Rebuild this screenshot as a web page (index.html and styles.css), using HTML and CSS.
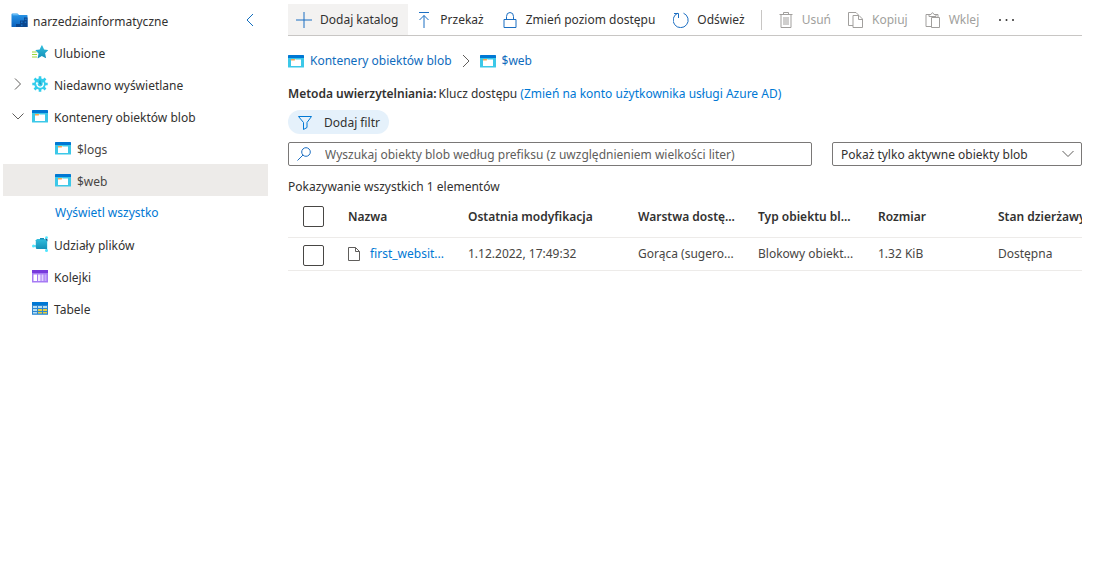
FILE: index.html
```html
<!DOCTYPE html>
<html lang="pl">
<head>
<meta charset="utf-8">
<title>narzedziainformatyczne</title>
<link rel="stylesheet" href="styles.css">
</head>
<body>
<svg class="sprite" aria-hidden="true">
  <defs>
    <linearGradient id="sky" x1="0" y1="0" x2="0" y2="1"><stop offset="0" stop-color="#32bedd"/><stop offset="1" stop-color="#1490b8"/></linearGradient>
    <linearGradient id="folder" x1="0" y1="0" x2="0" y2="1"><stop offset="0" stop-color="#2a98ea"/><stop offset="1" stop-color="#0a60bc"/></linearGradient>
  </defs>
  <symbol id="container" viewBox="0 0 16 13">
    <path d="M0 3h16v9q0 .5-.5.5H.5q-.5 0-.5-.5z" fill="#3cc8e8"/>
    <path d="M.5 0h15q.5 0 .5.5V3H0V.500Q0 0 .5 0z" fill="#0078d4"/>
    <path d="M3 4h4l1 .5h5V11H3z" fill="#fff"/>
    <path d="M3 4h3.600l.8.700-.8.800H3z" fill="#f7a650"/>
  </symbol>
</svg>
<div class="app">
  <nav class="tree">
    <div class="row account">
      <svg class="icon big" viewBox="0 0 17 17"><path d="M.5 2.500q0-1 1-1h5l1.500 1.500h8q.5 0 .5.500v11q0 .5-.5.5h-15q-.5 0-.5-.5z" fill="url(#folder)"/><path d="M1.500 2.200h5l1 1h-6z" fill="#7cc8f8"/><path d="M13 5.500h3.500V15H13zM9 8.500h4V15H9zM5 12h4v3H5z" fill="#0b478f"/><path d="M13.700 6.500h2V8h-2zM10 9.500h1.500V11H10zM13.700 9.500h1.500V11h-1.500zM10 12.500h1.500V14H10z" fill="#1c70c4"/></svg>
      <span>narzedziainformatyczne</span>
      <button class="collapse" type="button" aria-label="Zwiń"><svg viewBox="0 0 8 14"><path d="M7 1 1 7l6 6"/></svg></button>
    </div>
    <a class="row" href="#"><span class="caret"></span>
      <svg class="icon" viewBox="0 0 16 16"><path d="M9.500 1.500q.4-.6.8 0l1.800 4 3.700.4q.5.200.1.600l-2.800 2.800.9 4.400q0 .5-.5.300L9.800 12l-3.700 2.200q-.5.100-.4-.4l.8-4.400-2.900-2.800q-.3-.5.200-.6l3.900-.5z" fill="url(#sky)"/><path d="M0 8h4.500M0 10.500h5M0 13h5" stroke="#9bd83c" stroke-width="1.200" fill="none"/></svg>
      <span>Ulubione</span></a>
    <a class="row" href="#"><span class="caret"><svg viewBox="0 0 14 14"><path d="M4 1.500 9.500 7 4 12.500"/></svg></span>
      <svg class="icon" viewBox="0 0 16 16"><g stroke="#32cdec" stroke-width="2.600"><path d="M8 .3v15.400M.3 8h15.400M2.500 2.500l11 11M13.500 2.500l-11 11"/></g><circle cx="8" cy="8" r="5.800" fill="#32cdec"/><path d="M5 7.500a3.200 3.200 0 1 0 6-1" fill="none" stroke="#fff" stroke-width="1.300"/><path d="m3.700 8.200 1-2.400 1.900 1.700z" fill="#fff"/><path d="M8 4.500v3.500h1.500" stroke="#1c8fb5"/></svg>
      <span>Niedawno wyświetlane</span></a>
    <a class="row" href="#"><span class="caret"><svg viewBox="0 0 14 14"><path d="M1.500 4.500 7 10l5.500-5.500"/></svg></span>
      <svg class="tile"><use href="#container"/></svg>
      <span>Kontenery obiektów blob</span></a>
    <a class="row child" href="#"><svg class="tile"><use href="#container"/></svg><span>$logs</span></a>
    <a class="row child selected" href="#" aria-current="page"><svg class="tile"><use href="#container"/></svg><span>$web</span></a>
    <a class="row child all" href="#"><span>Wyświetl wszystko</span></a>
    <a class="row" href="#"><span class="caret"></span>
      <svg class="icon" viewBox="0 0 16 16"><path d="M1.500 10H5M14.500 1v14" stroke="#50d2ee" stroke-width="1.500"/><path d="M5 3h10v10H5q-1.200 0-1.200-1.200V4.200z" fill="url(#sky)"/><path d="M8 2h4v1.500H8z" fill="#1490b8"/><path d="m13 2 2.500 1.500-.2 2z" fill="#173f75"/><circle cx="1.500" cy="10" r="1.500" fill="#50e6ff"/><circle cx="14.500" cy="1.500" r="1.300" fill="#50e6ff"/><circle cx="14.500" cy="14.500" r="1.500" fill="#50e6ff"/></svg>
      <span>Udziały plików</span></a>
    <a class="row" href="#"><span class="caret"></span>
      <svg class="tile" viewBox="0 0 16 13"><path d="M0 3h16v9.500H0z" fill="#a67af4"/><path d="M0 0h16v3H0z" fill="#773adc"/><path d="M1.500 4.500H5v6.500H1.500z" fill="#fff"/><path d="M6 4.500h2.500v6.500H6z" fill="#f1e9ff"/><path d="M9.500 4.500h2v6.500h-2z" fill="#e2d1ff"/><path d="M12.500 4.500h2v6.500h-2z" fill="#c9acfa"/></svg>
      <span>Kolejki</span></a>
    <a class="row" href="#"><span class="caret"></span>
      <svg class="tile" viewBox="0 0 16 13"><path d="M0 0h16v12.500H0z" fill="#0078d4"/><path d="M0 3h16v9.500H0z" fill="#2c86d0"/><path d="M1 4h4v2H1zM6 4h4v2H6zM11 4h4v2h-4zM1 7h4v2H1zM1 10h4v1.500H1z" fill="#b5def5"/><path d="M6 7h4v2H6zM11 7h4v2h-4zM6 10h4v1.500H6zM11 10h4v1.500h-4z" fill="#e6cf3e"/></svg>
      <span>Tabele</span></a>
  </nav>

  <main class="content">
    <div class="toolbar" role="toolbar">
      <button class="hover" type="button"><svg viewBox="0 0 16 16"><path d="M8 0v16M0 8h16"/></svg>Dodaj katalog</button>
      <button type="button"><svg viewBox="0 0 16 16"><path d="M3 .5h10M8 16V3.500M3.500 8 8 3.500 12.500 8"/></svg>Przekaż</button>
      <button type="button"><svg viewBox="0 0 16 16"><path d="M2 7.500h12v8H2zM4.500 7.500v-3a3.500 4 0 0 1 7 0v3"/></svg>Zmień poziom dostępu</button>
      <button type="button"><svg viewBox="0 0 16 16"><path d="M10.500 1.200A7.500 7.500 0 1 1 4.800 1.200M1 1.500h4.500V6"/></svg>Odśwież</button>
      <span class="divider"></span>
      <button type="button" disabled><svg viewBox="0 0 16 16"><path d="M1.500 2.500h13M5.500 2.500v-2h5v2M3 2.500v13h10v-13M6 5v8M8 5v8M10 5v8"/></svg>Usuń</button>
      <button type="button" disabled><svg viewBox="0 0 16 16"><path d="M5 13.500H.5V.500H8l2.500 2.500M5 3.500h6l3.500 3.500v8.500H5zM10.500 3.500v4h4"/></svg>Kopiuj</button>
      <button type="button" disabled><svg viewBox="0 0 16 16"><path d="M6.500 14.500H1V2.500h3.500M10.500 2.500H13V5.500M4 4.500v-2h2q1.500-3.500 3 0h2v2zM6.500 5.500h8v10h-8z"/></svg>Wklej</button>
      <button class="more" type="button" aria-label="Więcej"><svg viewBox="0 0 16 16"><circle cx="1" cy="8" r="1"/><circle cx="7.500" cy="8" r="1"/><circle cx="14" cy="8" r="1"/></svg></button>
    </div>

    <nav class="crumbs" aria-label="Ścieżka">
      <a href="#"><svg class="tile"><use href="#container"/></svg>Kontenery obiektów blob</a>
      <svg class="sep" viewBox="0 0 8 14"><path d="m1 1 6 6-6 6"/></svg>
      <a href="#"><svg class="tile"><use href="#container"/></svg>$web</a>
    </nav>

    <p class="auth"><b>Metoda uwierzytelniania:</b><span>Klucz dostępu <a href="#">(Zmień na konto użytkownika usługi Azure AD)</a></span></p>

    <button class="pill" type="button"><svg viewBox="0 0 16 16"><path d="M1.500 1.500h13L10 7.500v5l-3.500 2v-7z"/></svg>Dodaj filtr</button>

    <div class="filters">
      <label class="search"><svg viewBox="0 0 14 14"><circle cx="9" cy="5" r="4.300"/><path d="M6 8 .5 13.500"/></svg>
        <input type="text" aria-label="Wyszukaj" placeholder="Wyszukaj obiekty blob według prefiksu (z uwzględnieniem wielkości liter)"></label>
      <div class="picker">
        <select aria-label="Widoczność"><option>Pokaż tylko aktywne obiekty blob</option></select>
        <svg viewBox="0 0 12 8"><path d="m.5 1 5.500 5.500L11.500 1"/></svg>
      </div>
    </div>

    <p class="count">Pokazywanie wszystkich 1 elementów</p>

    <div class="grid">
      <table>
        <colgroup><col class="c-check"><col class="c-std"><col class="c-date"><col class="c-std"><col class="c-std"><col class="c-std"><col class="c-std"></colgroup>
        <thead>
          <tr><th><input type="checkbox" aria-label="Zaznacz wszystko"></th><th>Nazwa</th><th>Ostatnia modyfikacja</th><th>Warstwa dostę...</th><th>Typ obiektu bl...</th><th>Rozmiar</th><th>Stan dzierżawy</th></tr>
        </thead>
        <tbody>
          <tr><td><input type="checkbox" aria-label="Zaznacz plik"></td>
            <td><a class="file" href="#"><svg viewBox="0 0 12 14"><path d="M.5.500h7L11.500 4.500v9H.5zM7.500.500v4h4"/></svg>first_websit...</a></td>
            <td>1.12.2022, 17:49:32</td><td>Gorąca (sugero...</td><td>Blokowy obiekt...</td><td>1.32 KiB</td><td>Dostępna</td></tr>
        </tbody>
      </table>
    </div>
  </main>
</div>
</body>
</html>
```
FILE: styles.css
```css
* { box-sizing: border-box; }
body {
  margin: 0;
  background: #fff;
  color: #323130;
  font: 12px/20px "Segoe UI", "Noto Sans", sans-serif;
}
button, input, select { font: inherit; color: inherit; }
button { border: 0; background: none; padding: 0; }
a { color: #0f6cbd; text-decoration: none; }
p { margin: 0; }
svg { flex: none; fill: none; stroke-width: 1; }
.sprite { position: absolute; width: 0; height: 0; }
.app { display: flex; gap: 20px; padding: 4px 11px 0 3px; min-height: 100vh; }

.tree { flex: none; width: 265px; }
.row {
  display: flex;
  align-items: center;
  height: 32px;
  padding-left: 8px;
  color: #323130;
  white-space: nowrap;
}
.row span { padding-top: 4px; }
.account { gap: 5px; }
.icon { width: 16px; height: 16px; margin-right: 6px; }
.icon.big { width: 17px; height: 17px; margin: 0; }
.tile { width: 16px; height: 13px; margin-right: 6px; }
.row .caret { display: flex; width: 21px; padding: 0; }
.caret svg { width: 14px; height: 14px; stroke: #605e5c; }
.collapse { display: flex; margin: 0 14px 0 auto; }
.collapse svg { width: 8px; height: 14px; stroke: #0f6cbd; }
.child { padding-left: 52px; color: #484644; }
.selected { background: #edebe9; }
.all { color: #0078d4; }
.all span { padding-top: 2px; }

.content { flex: 1; min-width: 0; }
.toolbar {
  display: flex;
  align-items: center;
  height: 32px;
  border-bottom: 1px solid #c8c6c4;
}
.toolbar button {
  display: flex;
  align-items: center;
  gap: 8px;
  height: 31px;
  padding: 1px 10px 0 8px;
  white-space: nowrap;
}
.toolbar svg { width: 16px; height: 16px; stroke: #1b6ec2; }
.toolbar .hover { background: #f3f2f1; }
.toolbar button:disabled { padding-right: 9px; color: #a19f9d; }
.toolbar button:disabled svg { stroke: #a19f9d; }
.toolbar .more { margin-left: 3px; }
.toolbar .more svg { fill: #323130; stroke: none; }
.divider { width: 1px; height: 20px; margin: 0 8px 0 6px; background: #c8c6c4; }

.crumbs { display: flex; align-items: center; gap: 10px; height: 20px; margin-top: 15px; }
.crumbs a { display: flex; align-items: center; }
.sep { width: 8px; height: 14px; stroke: #605e5c; }
.auth { display: flex; gap: 2px; margin-top: 13px; white-space: nowrap; }
.auth a { color: #0078d4; }
.auth b, th { font-weight: 600; }
.pill {
  display: flex;
  align-items: center;
  gap: 11px;
  height: 24px;
  margin-top: 6px;
  padding: 1px 9px 0;
  border-radius: 12px;
  background: #e5f1fb;
}
.pill svg { width: 16px; height: 16px; stroke: #0078d4; }

.filters { display: flex; gap: 20px; margin-top: 8px; }
.search {
  display: flex;
  flex: 1;
  align-items: center;
  gap: 14px;
  height: 24px;
  padding: 0 8px;
  border: 1px solid #7a7877;
  border-radius: 2px;
}
.search svg { width: 14px; height: 14px; stroke: #1b6ec2; }
.search input { flex: 1; min-width: 0; padding: 2px 0 0; border: 0; outline: 0; background: none; }
.search input::placeholder { color: #605e5c; }
.picker { display: grid; flex: none; width: 250px; }
.picker > * { grid-area: 1 / 1; }
.picker select {
  appearance: none;
  height: 24px;
  padding: 2px 28px 0 8px;
  border: 1px solid #7a7877;
  border-radius: 2px;
  background: #fff;
}
.picker svg {
  place-self: center end;
  width: 12px;
  height: 8px;
  margin-right: 8px;
  stroke: #605e5c;
  pointer-events: none;
}
.count { margin-top: 11px; }

.grid { overflow: hidden; }
table { width: 822px; table-layout: fixed; border-collapse: collapse; }
.c-check { width: 52px; }
.c-std { width: 120px; }
.c-date { width: 170px; }
th, td {
  padding: 0 8px;
  border-bottom: 1px solid #edebe9;
  text-align: left;
  white-space: nowrap;
}
th { height: 40px; }
thead tr :first-child, tbody tr td:first-child { padding-left: 15px; }
td { height: 33px; color: #484644; }
td:first-child { padding-top: 3px; }
th input, td input {
  display: block;
  appearance: none;
  width: 21px;
  height: 21px;
  margin: 0;
  border: 1px solid #484644;
  border-radius: 2px;
}
.file { display: flex; align-items: center; gap: 10px; color: #0078d4; }
.file svg { width: 12px; height: 14px; stroke: #605e5c; }
```
